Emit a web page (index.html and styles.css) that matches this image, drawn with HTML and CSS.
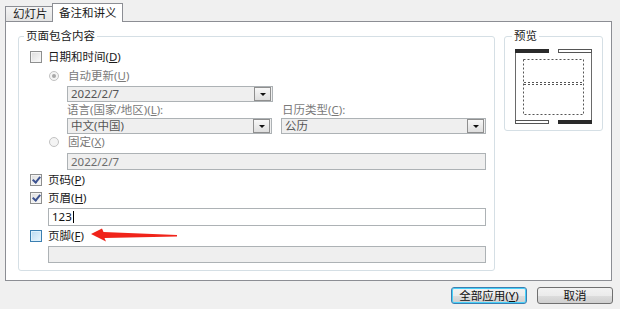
FILE: index.html
```html
<!DOCTYPE html>
<html lang="zh-CN">
<head>
    <meta charset="UTF-8">
    <title>页眉和页脚</title>
    <link rel="stylesheet" href="styles.css">
</head>
<body>
    <div class="tabs">
        <div class="tab">幻灯片</div>
        <div class="tab active">备注和讲义</div>
    </div>

    <div class="panel">
        <div class="group">
            <span class="legend">页面包含内容</span>

            <div class="row row-a">
                <span class="check"></span>
                <span>日期和时间(<u>D</u>)</span>
            </div>

            <div class="row row-b sub">
                <span class="radio on"></span>
                <span class="dim">自动更新(<u>U</u>)</span>
            </div>

            <div class="row row-c field-row">
                <div class="select w-date">
                    <span>2022/2/7</span>
                    <span class="drop"></span>
                </div>
            </div>

            <div class="row row-d field-row">
                <span class="dim col-l">语言(国家/地区)(<u>L</u>):</span>
                <span class="dim">日历类型(<u>C</u>):</span>
            </div>

            <div class="row row-e field-row split">
                <div class="select w-half">
                    <span>中文(中国)</span>
                    <span class="drop"></span>
                </div>
                <div class="select w-half">
                    <span>公历</span>
                    <span class="drop"></span>
                </div>
            </div>

            <div class="row row-f sub">
                <span class="radio"></span>
                <span class="dim">固定(<u>X</u>)</span>
            </div>

            <div class="row row-g field-row">
                <div class="input disabled w-wide">2022/2/7</div>
            </div>

            <div class="row row-h">
                <span class="check checked"></span>
                <span>页码(<u>P</u>)</span>
            </div>

            <div class="row row-i">
                <span class="check checked"></span>
                <span>页眉(<u>H</u>)</span>
            </div>

            <div class="row row-j text-row">
                <div class="input w-full">123<span class="caret"></span></div>
            </div>

            <div class="row row-k">
                <span class="check hover"></span>
                <span>页脚(<u>F</u>)</span>
                <svg class="arrow" width="88" height="14" viewBox="0 0 88 14">
                    <path d="M0 6 L11 0.5 L12.5 4 L86 7 L86 8.5 L13.5 10 L15 13.5 Z" fill="#f0241a"/>
                </svg>
            </div>

            <div class="row row-l text-row">
                <div class="input disabled w-full"></div>
            </div>
        </div>

        <div class="preview">
            <span class="legend">预览</span>
            <svg class="page" width="77" height="75" viewBox="0 0 77 75">
                <line x1="0.5" y1="2" x2="0.5" y2="73" stroke="#6a6a6a"/>
                <line x1="76.5" y1="2" x2="76.5" y2="73" stroke="#6a6a6a"/>
                <rect x="0.5" y="0.5" width="33" height="3" fill="#2a2a2a" stroke="#2a2a2a"/>
                <rect x="43.5" y="0.5" width="33" height="3" fill="#fff" stroke="#555"/>
                <rect x="0.5" y="71.5" width="33" height="3" fill="#fff" stroke="#555"/>
                <rect x="43.5" y="71.5" width="33" height="3" fill="#2a2a2a" stroke="#2a2a2a"/>
                <rect x="8.5" y="10.5" width="60" height="55" fill="none" stroke="#555" stroke-dasharray="2 2"/>
                <line x1="9" y1="33.5" x2="68" y2="33.5" stroke="#555" stroke-dasharray="2 2"/>
                <line x1="9" y1="35.5" x2="68" y2="35.5" stroke="#555" stroke-dasharray="2 2"/>
            </svg>
        </div>
    </div>

    <div class="buttons">
        <button class="btn default">全部应用(<u>Y</u>)</button>
        <button class="btn">取消</button>
    </div>
</body>
</html>
```

FILE: styles.css
```css
body {
    margin: 0;
    width: 620px;
    height: 309px;
    background-color: #f0f0f0;
    font-family: "Noto Sans", "Noto Sans CJK SC", sans-serif;
    font-size: 11.5px;
    color: #1a1a1a;
    overflow: hidden;
}
u {
    text-decoration: underline;
    text-underline-offset: 1px;
}

/* tabs */
.tabs {
    display: flex;
    align-items: flex-end;
    height: 21px;
    padding-left: 5px;
}
.tab {
    height: 14px;
    line-height: 14px;
    padding: 0 2px 0 7px;
    width: 37px;
    border: 1px solid #8c8e94;
    border-bottom: none;
    background: linear-gradient(#f4f4f4, #e4e4e4);
}
.tab.active {
    position: relative;
    z-index: 1;
    height: 18px;
    line-height: 18px;
    width: 63px;
    padding: 0 0 0 6px;
    margin-bottom: -1px;
    background: #fff;
    margin-left: -1px;
}

/* main panel */
.panel {
    box-sizing: border-box;
    width: 607px;
    height: 260px;
    margin-left: 5px;
    padding: 14px 8px 0 12px;
    display: flex;
    gap: 9px;
    align-items: flex-start;
    background: #fff;
    border: 1px solid #8c8e94;
}
.group {
    position: relative;
    box-sizing: border-box;
    width: 477px;
    height: 235px;
    padding: 13px 8px 0 11px;
    border: 1px solid #d5dfe5;
    border-radius: 3px;
}
.legend {
    position: absolute;
    top: -8px;
    left: 5px;
    padding: 0 2px;
    background: #fff;
    line-height: 14px;
}
.preview {
    position: relative;
    box-sizing: border-box;
    width: 99px;
    height: 95px;
    padding: 12px 0 0 10px;
    border: 1px solid #d5dfe5;
    border-radius: 3px;
}
.preview .legend {
    left: 7px;
}
.page {
    display: block;
}

/* rows */
.row {
    display: flex;
    align-items: center;
    height: 14px;
    line-height: 14px;
    white-space: nowrap;
}
.row-b { margin-top: 5px; }
.row-c { margin-top: 3px; height: 16px; }
.row-d { margin-top: 1px; }
.row-e { margin-top: 1px; height: 16px; }
.row-f { margin-top: 1px; }
.row-g { margin-top: 4px; height: 17px; }
.row-h { margin-top: 3px; }
.row-i { margin-top: 4px; }
.row-j { margin-top: 3px; height: 18px; }
.row-k { margin-top: 3px; }
.row-l { margin-top: 3px; height: 17px; }

.sub { padding-left: 19px; }
.field-row { padding-left: 37px; }
.text-row { padding-left: 18px; }
.split { gap: 9px; }
.col-l { width: 215px; }
.dim { color: #7a7a7a; }

/* checkbox + radio */
.check {
    box-sizing: border-box;
    flex: none;
    width: 12px;
    height: 12px;
    margin-right: 6px;
    border: 1px solid #8e8f8f;
    background: linear-gradient(135deg, #dcdcdc, #fbfbfb);
    box-shadow: inset 0 0 0 1px #f4f4f4;
    position: relative;
}
.check.checked::after {
    content: "";
    position: absolute;
    left: 3px;
    top: 0px;
    width: 3px;
    height: 6px;
    border: solid #3d5390;
    border-width: 0 2px 2px 0;
    transform: rotate(40deg);
}
.check.hover {
    border-color: #3c7fb1;
    background: linear-gradient(135deg, #b9d9f0, #eaf6fd);
    box-shadow: inset 0 0 0 1px #def1fc;
}
.radio {
    box-sizing: border-box;
    flex: none;
    width: 10px;
    height: 10px;
    margin-right: 9px;
    border: 1px solid #c2c2c2;
    border-radius: 50%;
    background: #f4f4f4;
    position: relative;
}
.radio.on::after {
    content: "";
    position: absolute;
    left: 2px;
    top: 2px;
    width: 4px;
    height: 4px;
    border-radius: 50%;
    background: #a8a8a8;
}

/* fields */
.select, .input {
    box-sizing: border-box;
    height: 100%;
    border: 1px solid #adb2b5;
    display: flex;
    align-items: center;
    padding-left: 3px;
    line-height: 14px;
}
.select {
    background: #efefef;
    color: #555;
    justify-content: space-between;
    padding-right: 1px;
}
.drop {
    box-sizing: border-box;
    width: 17px;
    height: 14px;
    border: 1px solid #8f8f8f;
    background: linear-gradient(#f8f8f8, #dedede);
    position: relative;
}
.drop::after {
    content: "";
    position: absolute;
    left: 5px;
    top: 5px;
    border-left: 3px solid transparent;
    border-right: 3px solid transparent;
    border-top: 3px solid #111;
}
.w-date { width: 206px; }
.w-half { width: 205px; }
.w-wide { width: 419px; }
.w-full { width: 438px; }
.input {
    background: #fff;
    color: #111;
}
.input.disabled {
    background: #efefef;
    color: #6d6d6d;
}
.caret {
    display: inline-block;
    width: 1px;
    height: 12px;
    margin-left: 1px;
    background: #000;
}
.arrow {
    margin-left: 7px;
    margin-top: -3px;
}

/* buttons */
.buttons {
    display: flex;
    justify-content: flex-end;
    gap: 10px;
    margin-top: 6px;
    padding-right: 7px;
}
.btn {
    box-sizing: border-box;
    width: 76px;
    height: 17px;
    padding: 0;
    font-family: inherit;
    font-size: 11.5px;
    line-height: 14px;
    color: #111;
    border: 1px solid #707070;
    border-radius: 3px;
    background: linear-gradient(#f2f2f2 0%, #ebebeb 50%, #dddddd 51%, #cfcfcf 100%);
}
.btn.default {
    border-color: #3c7fb1;
    box-shadow: inset 0 0 0 1px #48d0f9;
}
```
